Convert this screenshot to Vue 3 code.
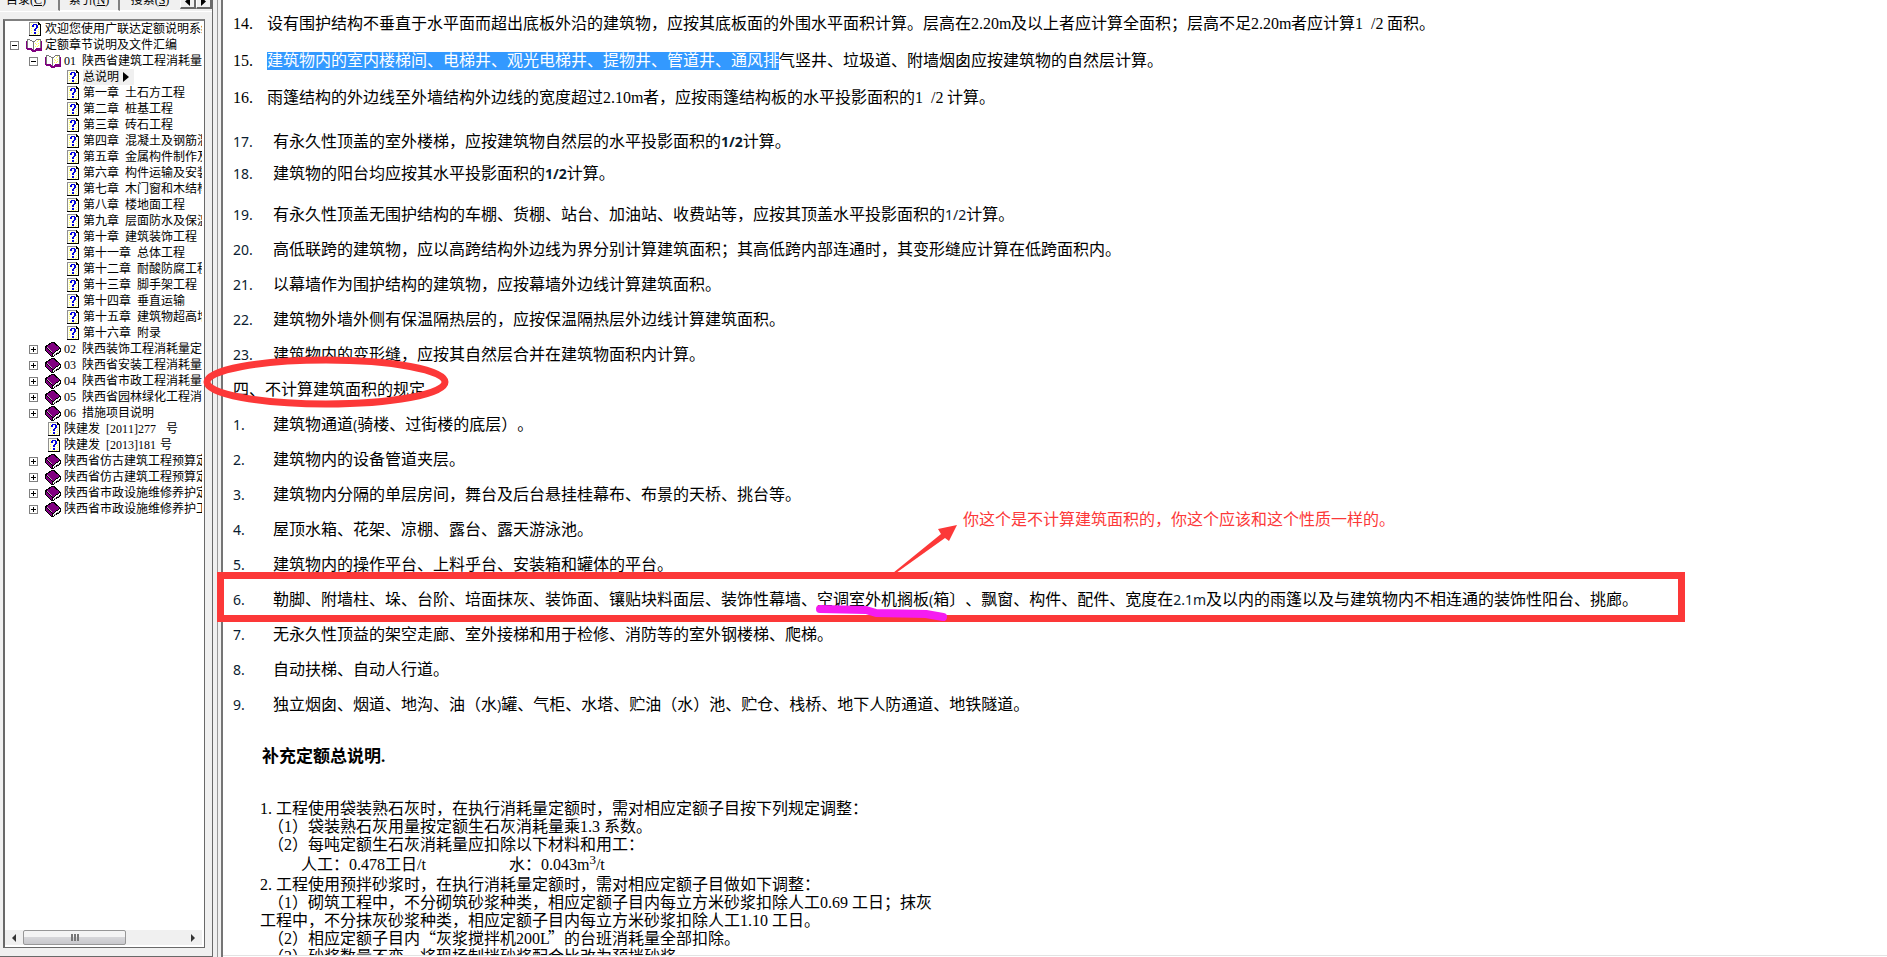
<script setup>
const tree = [
  { level: 1, icon: 'page', text: '欢迎您使用广联达定额说明系统' },
  { level: 0, icon: 'open', text: '定额章节说明及文件汇编' },
  { level: 1, icon: 'open', text: '01 陕西省建筑工程消耗量定额' },
  { level: 3, icon: 'page', text: '总说明', active: true },
  { level: 3, icon: 'page', text: '第一章 土石方工程' },
  { level: 3, icon: 'page', text: '第二章 桩基工程' },
  { level: 3, icon: 'page', text: '第三章 砖石工程' },
  { level: 3, icon: 'page', text: '第四章 混凝土及钢筋混凝土' },
  { level: 3, icon: 'page', text: '第五章 金属构件制作及安装' },
  { level: 3, icon: 'page', text: '第六章 构件运输及安装' },
  { level: 3, icon: 'page', text: '第七章 木门窗和木结构' },
  { level: 3, icon: 'page', text: '第八章 楼地面工程' },
  { level: 3, icon: 'page', text: '第九章 层面防水及保温' },
  { level: 3, icon: 'page', text: '第十章 建筑装饰工程' },
  { level: 3, icon: 'page', text: '第十一章 总体工程' },
  { level: 3, icon: 'page', text: '第十二章 耐酸防腐工程' },
  { level: 3, icon: 'page', text: '第十三章 脚手架工程' },
  { level: 3, icon: 'page', text: '第十四章 垂直运输' },
  { level: 3, icon: 'page', text: '第十五章 建筑物超高增加' },
  { level: 3, icon: 'page', text: '第十六章 附录' },
  { level: 1, icon: 'closed', text: '02 陕西装饰工程消耗量定额' },
  { level: 1, icon: 'closed', text: '03 陕西省安装工程消耗量' },
  { level: 1, icon: 'closed', text: '04 陕西省市政工程消耗量' },
  { level: 1, icon: 'closed', text: '05 陕西省园林绿化工程消耗' },
  { level: 1, icon: 'closed', text: '06 措施项目说明' },
  { level: 2, icon: 'page', text: '陕建发 [2011]277 号' },
  { level: 2, icon: 'page', text: '陕建发 [2013]181号' },
  { level: 1, icon: 'closed', text: '陕西省仿古建筑工程预算定额' },
  { level: 1, icon: 'closed', text: '陕西省仿古建筑工程预算定额' },
  { level: 1, icon: 'closed', text: '陕西省市政设施维修养护定额' },
  { level: 1, icon: 'closed', text: '陕西省市政设施维修养护工程' },
]

const rules = [
  { n: '14.', text: '设有围护结构不垂直于水平面而超出底板外沿的建筑物，应按其底板面的外围水平面积计算。层高在2.20m及以上者应计算全面积；层高不足2.20m者应计算1 /2面积。' },
  { n: '15.', mark: '建筑物内的室内楼梯间、电梯井、观光电梯井、提物井、管道井、通风排', text: '气竖井、垃圾道、附墙烟囱应按建筑物的自然层计算。' },
  { n: '16.', text: '雨篷结构的外边线至外墙结构外边线的宽度超过2.10m者，应按雨篷结构板的水平投影面积的1 /2计算。' },
]

const stairs = [
  { n: '17.', text: '有永久性顶盖的室外楼梯，应按建筑物自然层的水平投影面积的1/2计算。' },
  { n: '18.', text: '建筑物的阳台均应按其水平投影面积的1/2计算。' },
]

const more = [
  { n: '19.', text: '有永久性顶盖无围护结构的车棚、货棚、站台、加油站、收费站等，应按其顶盖水平投影面积的1/2计算。' },
  { n: '20.', text: '高低联跨的建筑物，应以高跨结构外边线为界分别计算建筑面积；其高低跨内部连通时，其变形缝应计算在低跨面积内。' },
  { n: '21.', text: '以幕墙作为围护结构的建筑物，应按幕墙外边线计算建筑面积。' },
  { n: '22.', text: '建筑物外墙外侧有保温隔热层的，应按保温隔热层外边线计算建筑面积。' },
  { n: '23.', text: '建筑物内的变形缝，应按其自然层合并在建筑物面积内计算。' },
]

const excluded = [
  { n: '1.', text: '建筑物通道(骑楼、过街楼的底层）。' },
  { n: '2.', text: '建筑物内的设备管道夹层。' },
  { n: '3.', text: '建筑物内分隔的单层房间，舞台及后台悬挂桂幕布、布景的天桥、挑台等。' },
  { n: '4.', text: '屋顶水箱、花架、凉棚、露台、露天游泳池。' },
  { n: '5.', text: '建筑物内的操作平台、上料乎台、安装箱和罐体的平台。' },
  { n: '6.', text: '勒脚、附墙柱、垛、台阶、培面抹灰、装饰面、镶贴块料面层、装饰性幕墙、空调室外机搁板(箱〕、飘窗、构件、配件、宽度在2.1m及以内的雨篷以及与建筑物内不相连通的装饰性阳台、挑廊。' },
  { n: '7.', text: '无永久性顶益的架空走廊、室外接梯和用于检修、消防等的室外钢楼梯、爬梯。' },
  { n: '8.', text: '自动扶梯、自动人行道。' },
  { n: '9.', text: '独立烟囱、烟道、地沟、油（水)罐、气柜、水塔、贮油（水）池、贮仓、栈桥、地下人防通道、地铁隧道。' },
]

const notesBefore = [
  { text: '1.工程使用袋装熟石灰时，在执行消耗量定额时，需对相应定额子目按下列规定调整：' },
  { sub: true, text: '（1）袋装熟石灰用量按定额生石灰消耗量乘1.3系数。' },
  { sub: true, text: '（2）每吨定额生石灰消耗量应扣除以下材料和用工：' },
]
const notesAfter = [
  { text: '2.工程使用预拌砂浆时，在执行消耗量定额时，需对相应定额子目做如下调整：' },
  { sub: true, text: '（1）砌筑工程中，不分砌筑砂浆种类，相应定额子目内每立方米砂浆扣除人工0.69工日；抹灰' },
  { text: '工程中，不分抹灰砂浆种类，相应定额子目内每立方米砂浆扣除人工1.10工日。' },
  { sub: true, text: '（2）相应定额子目内“灰浆搅拌机200L”的台班消耗量全部扣除。' },
  { sub: true, text: '（3）砂浆数量不变，将现场制拌砂浆配合比改为预拌砂浆。' },
]

// Splits a line into CJK text, blanks and half-width runs; a half-width character takes half an em.
function runs(text) {
  return text
    .split(/( +|[\x21-\x7e]+)/)
    .filter(Boolean)
    .map((t) => ({ t, half: /^[\x20-\x7e]/.test(t) }))
}
</script>

<template>
  <div class="viewer">
    <aside class="side">
      <div class="tabs" role="tablist">
        <button class="tab on" role="tab" aria-selected="true">目录(<u>C</u>)</button>
        <button class="tab" role="tab">索引(<u>N</u>)</button>
        <button class="tab" role="tab">搜索(<u>S</u>)</button>
        <button class="step" aria-label="向左"><svg width="5" height="9" viewBox="0 0 5 9"><path d="M5 0V9L0 4.500Z" /></svg></button>
        <button class="step" aria-label="向右"><svg width="5" height="9" viewBox="0 0 5 9"><path d="M0 0V9L5 4.500Z" /></svg></button>
      </div>
      <div class="panel">
        <nav class="box">
          <ul class="tree">
            <li v-for="(item, i) in tree" :key="i" class="node" :class="'l' + item.level">
              <button v-if="item.icon !== 'page'" class="toggle" :aria-label="item.icon === 'open' ? '收起' : '展开'">
                <svg width="9" height="9" viewBox="0 0 9 9" shape-rendering="crispEdges">
                  <path fill="#fff" stroke="#808080" d="M.5.5h8v8h-8z" />
                  <path fill="#000" d="M2 4h5v1H2z" />
                  <path v-if="item.icon === 'closed'" fill="#000" d="M4 2h1v5H4z" />
                </svg>
              </button>
              <a href="#" class="link">
                <svg v-if="item.icon === 'page'" class="page" width="12" height="14" viewBox="0 0 12 14" shape-rendering="crispEdges">
                  <path fill="#fffff0" d="M1 1h8l2 2v10H1z" />
                  <path fill="#ffff70" d="M2 2h1v1H2zM2 4h1v1H2zM2 6h1v1H2zM2 8h1v1H2zM2 10h1v1H2zM4 12h1v1H4zM6 12h1v1H6zM8 12h1v1H8zM9 5h1v1H9zM9 7h1v1H9zM9 9h1v1H9zM9 11h1v1H9zM4 2h1v1H4zM6 2h1v1H6z" />
                  <path fill="#909090" d="M0 0h9v1H1v12H0z" />
                  <path fill="#000" d="M9 0h1v1h1v1h1v12H0v-1h11V3H9z" />
                  <path fill="#0000e0" d="M4 2h4v1H4zM3 3h2v2H3zM7 3h2v3H7zM6 6h2v1H6zM5 7h2v2H5zM5 10h2v2H5z" />
                </svg>
                <svg v-else-if="item.icon === 'open'" class="book" width="16" height="14" viewBox="0 0 16 14" shape-rendering="crispEdges">
                  <path fill="#800080" d="M0 3h16v10h-5l-2 1H6l-2-2H2l-2-1z" />
                  <path fill="#fff" d="M2 1h2l3 3v8L5 10H2z" />
                  <path fill="#fff" d="M8 4l3-3h3v9h-3l-3 2z" />
                  <path fill="#ffff50" d="M9 5h1v1H9zM11 3h1v1h-1zM10 6h1v1h-1zM12 5h1v1h-1zM9 8h1v1H9zM11 8h1v1h-1zM12 7h1v1h-1zM12 2h1v1h-1z" />
                  <path fill="none" stroke="#777" d="M1.500 10V1.500h2L7.500 4v8M8 3.500l3-2h3.500V10" />
                </svg>
                <svg v-else class="book" width="16" height="15" viewBox="0 0 16 15" shape-rendering="crispEdges">
                  <path fill="#000" d="M7 0h2l7 6v4l-8 5H6L0 9V4z" />
                  <path fill="#800080" d="M7 1h1l7 5-7 5L1 5zM1 6l6 5v3L1 9z" />
                  <path fill="#fff" d="M8 12l7-5v2l-7 5z" />
                  <path fill="#c8a0c8" d="M2 5h1v1H2zM4 7h1v1H4zM6 9h1v1H6zM3 6h1v1H3zM5 8h1v1H5z" />
                  <path fill="#909090" d="M9 12h2v1H9zM12 10h2v1h-2z" />
                </svg>
                <span class="label" :class="{ active: item.active }"><template v-for="(r, k) in runs(item.text)" :key="k"><span v-if="r.half" class="half" :style="{ width: r.t.length / 2 + 'em' }">{{ r.t }}</span><template v-else>{{ r.t }}</template></template><svg v-if="item.active" class="caret" width="6" height="10" viewBox="0 0 6 10"><path d="M0 0L6 5L0 10Z" /></svg></span>
              </a>
            </li>
          </ul>
          <div class="hbar">
            <button class="arrow" aria-label="向左滚动"><svg width="4" height="8" viewBox="0 0 4 8"><path d="M4 0V8L0 4Z" /></svg></button>
            <div class="track"><div class="thumb"><i></i><i></i><i></i></div></div>
            <button class="arrow" aria-label="向右滚动"><svg width="4" height="8" viewBox="0 0 4 8"><path d="M0 0V8L4 4Z" /></svg></button>
          </div>
        </nav>
      </div>
    </aside>
    <div class="splitter"></div>
    <main class="doc">
      <section class="rules">
        <p v-for="r in rules" :key="r.n"><span class="num">{{ r.n }}</span><mark v-if="r.mark">{{ r.mark }}</mark><template v-for="(x, k) in runs(r.text)" :key="k"><span v-if="x.half" class="half" :style="{ width: x.t.length / 2 + 'em' }">{{ x.t }}</span><template v-else>{{ x.t }}</template></template></p>
      </section>
      <section class="list stairs">
        <p v-for="r in stairs" :key="r.n"><span class="num">{{ r.n }}</span><template v-for="(x, k) in runs(r.text)" :key="k"><b v-if="x.half" class="sans">{{ x.t }}</b><template v-else>{{ x.t }}</template></template></p>
      </section>
      <section class="list">
        <p v-for="r in more" :key="r.n"><span class="num">{{ r.n }}</span><template v-for="(x, k) in runs(r.text)" :key="k"><span v-if="x.half" class="sans">{{ x.t }}</span><template v-else>{{ x.t }}</template></template></p>
        <p>四、不计算建筑面积的规定</p>
        <p v-for="r in excluded" :key="r.n"><span class="num">{{ r.n }}</span><template v-for="(x, k) in runs(r.text)" :key="k"><span v-if="x.half" class="sans">{{ x.t }}</span><template v-else>{{ x.t }}</template></template></p>
      </section>
      <h2>补充定额总说明.</h2>
      <section class="notes">
        <p v-for="(r, i) in notesBefore" :key="i" :class="{ sub: r.sub }"><template v-for="(x, k) in runs(r.text)" :key="k"><span v-if="x.half" class="half" :style="{ width: x.t.length / 2 + 'em' }">{{ x.t }}</span><template v-else>{{ x.t }}</template></template></p>
        <p class="amounts"><span>人工：<span class="half">0.478</span>工日<span class="half">/t</span></span><span>水：<span class="half">0.043m<sup>3</sup>/t</span></span></p>
        <p v-for="(r, i) in notesAfter" :key="'a' + i" :class="{ sub: r.sub }"><template v-for="(x, k) in runs(r.text)" :key="k"><span v-if="x.half" class="half" :style="{ width: x.t.length / 2 + 'em' }">{{ x.t }}</span><template v-else>{{ x.t }}</template></template></p>
      </section>
    </main>
    <svg class="ink" width="1700" height="640" viewBox="0 0 1700 640" aria-hidden="true">
      <ellipse cx="326" cy="382" rx="119" ry="22" fill="none" stroke="#fc3838" stroke-width="7" />
      <path d="M220.500 575.500H1681.500V618.500H220.500Z" fill="none" stroke="#fc3838" stroke-width="7" />
      <path d="M893 573L941 534L938 529L957 525L949 541L945 538L896 573Z" fill="#fc3838" />
      <path d="M820 609L866 610L876 613L926 614L943 617" fill="none" stroke="#f51cf0" stroke-width="8" stroke-linecap="round" stroke-linejoin="round" />
    </svg>
    <p class="remark">你这个是不计算建筑面积的，你这个应该和这个性质一样的。</p>
  </div>
</template>

<style>
body {
  margin: 0;
  background: #fff;
}
</style>

<style scoped>
.viewer {
  position: relative;
  display: flex;
  height: 100vh;
  overflow: hidden;
  font-family: "Liberation Serif", "Noto Sans CJK SC", serif;
  font-size: 16px;
  color: #000;
  white-space: pre;
  text-spacing-trim: space-all;
  text-autospace: no-autospace;
  font-kerning: none;
}
p, h2, ul {
  margin: 0;
  padding: 0;
}
button {
  padding: 0;
  border: 0;
  background: none;
  font: inherit;
  color: inherit;
}
.half {
  display: inline-block;
  font-family: "Liberation Serif", serif;
}

/* navigation pane */
.side {
  box-sizing: border-box;
  flex: 0 0 213px;
  min-width: 0;
  display: flex;
  flex-direction: column;
  background: #f0f0f0;
  border-right: 1px solid #696969;
  border-bottom: 1px solid #696969;
  font-size: 12px;
}
.tabs {
  display: flex;
  flex: 0 0 11px;
  overflow: hidden;
}
.tab {
  box-sizing: border-box;
  flex: none;
  width: 60px;
  height: 11px;
  line-height: 16px;
  border-right: 2px solid #808080;
  border-bottom: 1px solid #fff;
  display: flex;
  justify-content: center;
  align-items: flex-end;
  padding-bottom: 2px;
}
.tab.on {
  border-bottom-color: #f0f0f0;
  padding-right: 6px;
}
.tab:nth-child(3) {
  border-right: 0;
}
.step {
  box-sizing: border-box;
  flex: none;
  width: 16px;
  height: 9px;
  border: solid #696969;
  border-width: 0 2px 2px 0;
  border-left: 1px solid #fff;
  display: flex;
  justify-content: center;
  align-items: flex-end;
  padding-bottom: 1px;
}
.panel {
  flex: 1;
  min-width: 0;
  min-height: 0;
  display: flex;
  padding: 7px 7px 8px 3px;
  border-top: 1px solid #fff;
}
.box {
  flex: 1;
  min-width: 0;
  display: flex;
  flex-direction: column;
  border: 2px solid #696969;
  border-top-color: #808080;
  border-right: 1px solid #696969;
  border-bottom-width: 1px;
  background: #fff;
  padding: 0 2px 2px 0;
}
.tree {
  flex: 1;
  min-height: 0;
  overflow: hidden;
  list-style: none;
  padding-left: 1px;
}
.node {
  display: flex;
  align-items: center;
  height: 16px;
  line-height: 16px;
}
.l0 { padding-left: 4px; }
.l1 { padding-left: 23px; }
.l2 { padding-left: 42px; }
.l3 { padding-left: 61px; }
.toggle {
  display: flex;
  flex: none;
  margin-right: 7px;
}
.link {
  display: flex;
  align-items: center;
  color: inherit;
  text-decoration: none;
}
.page {
  flex: none;
  margin-right: 4px;
}
.book {
  flex: none;
  margin-right: 3px;
}
.label {
  line-height: 16px;
}
.active {
  display: flex;
  align-items: center;
  gap: 4px;
  padding-right: 5px;
  background: #f0f0f0;
}
.hbar {
  display: flex;
  align-items: stretch;
  height: 15px;
  background: #f0f0f0;
}
.arrow {
  width: 18px;
  display: flex;
  align-items: center;
  justify-content: center;
}
.arrow path {
  fill: #333;
}
.track {
  flex: 1;
  display: flex;
}
.thumb {
  box-sizing: border-box;
  width: 64%;
  display: flex;
  align-items: center;
  justify-content: center;
  gap: 1px;
  border: 1px solid #979797;
  border-radius: 2px;
  background: linear-gradient(#f4f4f4 50%, #d6d6d9 50%, #c8c8cc);
}
.thumb i {
  width: 2px;
  height: 7px;
  background: #777;
}
.splitter {
  box-sizing: border-box;
  flex: 0 0 10px;
  border-left: 4px solid #f0f0f0;
  border-right: 2px solid #757575;
  background: linear-gradient(90deg, #999 25%, #f0f0f0 25%);
}

/* document */
.doc {
  flex: 1;
  min-width: 0;
  overflow: hidden;
  padding: 5px 0 0 10px;
  margin-bottom: 1px;
  border-bottom: 1px solid #e3e3e3;
}
.rules p {
  line-height: 37px;
}
.num {
  display: inline-block;
  width: 34px;
}
mark {
  background: #3399ff;
  color: #fff;
  display: inline-block;
  line-height: 18px;
}
.list p {
  line-height: 35px;
}
.list.stairs {
  margin: 10px 0 7px;
}
.list.stairs p {
  line-height: 32px;
}
.list .num {
  width: 40px;
}
.list .num,
.sans {
  font-family: "Noto Sans", sans-serif;
  font-size: 14px;
  line-height: 16px;
  color: #0a1c30;
}
h2 {
  margin: 19px 0 25px 29px;
  font-size: 17px;
  line-height: 32px;
}
.notes {
  padding-left: 27px;
  font-family: "Noto Sans CJK SC", sans-serif;
  line-height: 18px;
}
.notes .half {
  line-height: 10px;
}
.notes .sub {
  padding-left: 8px;
}
.notes .amounts {
  display: flex;
  gap: 83px;
  padding-left: 41px;
  line-height: 22px;
}
sup {
  font-size: 13px;
  line-height: 1px;
}

/* reviewer's marks over the page */
.ink {
  position: absolute;
  left: 0;
  top: 0;
  pointer-events: none;
}
.remark {
  position: absolute;
  left: 963px;
  top: 510px;
  line-height: 20px;
  color: #fc3838;
}
</style>
